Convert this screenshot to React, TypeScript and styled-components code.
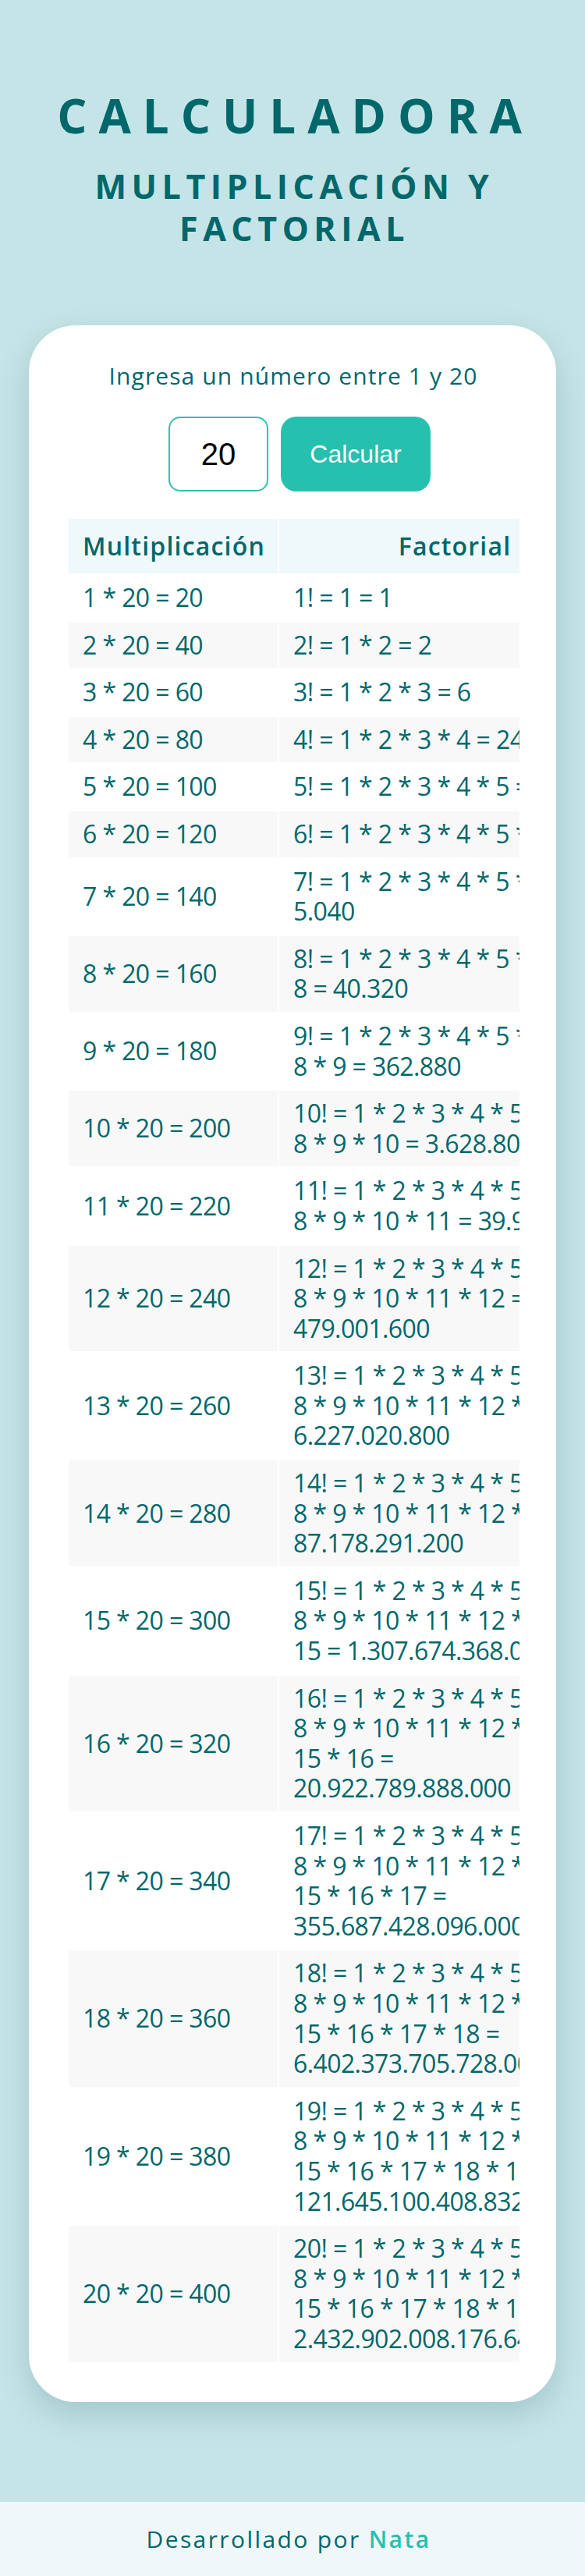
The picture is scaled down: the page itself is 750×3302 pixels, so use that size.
import React from "react";
import styled, { createGlobalStyle } from "styled-components";

const GlobalStyle = createGlobalStyle`
  html, body { margin: 0; padding: 0; }
  body {
    background: #c5e4e7;
    font-family: "Open Sans", "Noto Sans", sans-serif;
    color: #00676a;
  }
`;

const Page = styled.div`
  display: flex;
  flex-direction: column;
`;

const Header = styled.header`
  padding-top: 112px;
  text-align: center;
`;

const Title = styled.h1`
  margin: 0;
  font-size: 60px;
  line-height: 72px;
  font-weight: 700;
  letter-spacing: 15px;
  padding-left: 7px;
  color: #00676a;
`;

const Subtitle = styled.h2`
  margin: 28px 0 0;
  font-size: 43px;
  line-height: 54px;
  font-weight: 700;
  letter-spacing: 6.5px;
  padding-left: 5px;
  color: #00676a;
`;

const SubLine = styled.span`
  display: block;
`;

const Card = styled.main`
  box-sizing: border-box;
  width: 676px;
  margin: 97px auto 0;
  background: #ffffff;
  border-radius: 60px;
  padding: 45px 47px 49px 49px;
  box-shadow: 0 16px 40px rgba(0, 70, 80, 0.18);
`;

const Prompt = styled.p`
  margin: 0;
  text-align: center;
  font-size: 30px;
  line-height: 40px;
  letter-spacing: 1.1px;
  color: #00676a;
`;

const FormRow = styled.div`
  display: flex;
  justify-content: center;
  gap: 16px;
  margin-top: 32px;
  padding-left: 16px;
`;

const NumberInput = styled.input`
  box-sizing: border-box;
  width: 128px;
  height: 96px;
  border: 2px solid #2fc3b0;
  border-radius: 15px;
  text-align: center;
  font-family: "Liberation Sans", Arial, sans-serif;
  font-size: 40px;
  color: #000;
  background: #fff;
  outline: none;
  padding: 0;
`;

const CalcButton = styled.button`
  box-sizing: border-box;
  width: 192px;
  height: 96px;
  border: none;
  border-radius: 20px;
  background: #26c1ae;
  color: #ffffff;
  font-family: "Liberation Sans", Arial, sans-serif;
  font-size: 32px;
  cursor: pointer;
`;

const TableWrap = styled.div`
  margin-top: 33px;
  overflow: hidden;
`;

const Table = styled.table`
  width: 724px;
  table-layout: fixed;
  border-collapse: separate;
  border-spacing: 2px;
  color: #00676a;
`;

const HeadCell = styled.th<{ $w: number }>`
  width: ${(p) => p.$w}px;
  padding: 16px 18px;
  background: #eff8fa;
  font-size: 32px;
  line-height: 38px;
  font-weight: 600;
  letter-spacing: 1.2px;
  text-align: center;
`;

const Row = styled.tr`
  &:nth-child(even) td {
    background: #f8f8f8;
  }
  &:nth-child(odd) td {
    background: #ffffff;
  }
`;

const Cell = styled.td`
  padding: 10px 18px;
  font-size: 32px;
  line-height: 38.6px;
  letter-spacing: -0.6px;
  text-align: left;
  vertical-align: middle;
  white-space: nowrap;
`;

const Line = styled.span`
  display: block;
  white-space: nowrap;
`;

const Footer = styled.footer`
  margin-top: 128px;
  height: 96px;
  box-sizing: border-box;
  padding-right: 10px;
  background: #eff7f9;
  display: flex;
  align-items: center;
  justify-content: center;
  font-size: 30px;
  letter-spacing: 2.4px;
  color: #00676a;
`;

const Author = styled.span`
  margin-left: 10px;
  color: #26c1ae;
  font-weight: 600;
`;

const fmt = (v: bigint) => v.toString().replace(/\B(?=(\d{3})+(?!\d))/g, ".");

const RESULT_ON_NEW_LINE = new Set([7, 12, 13, 14, 16, 17, 18, 19, 20]);

function factorialLines(n: number): string[] {
  let f = BigInt(1);
  for (let i = 2; i <= n; i++) f *= BigInt(i);
  const nums = Array.from({ length: n }, (_, i) => i + 1);
  const groups = [nums.slice(0, 7), nums.slice(7, 14), nums.slice(14)].filter(
    (g) => g.length > 0
  );
  const lines = groups.map((g, gi) => {
    let s = g.join(" * ");
    if (gi === 0) s = `${n}! = ` + s;
    return gi === groups.length - 1 ? s : s + " *";
  });
  const result = fmt(f);
  if (RESULT_ON_NEW_LINE.has(n)) {
    lines[lines.length - 1] += " =";
    lines.push(result);
  } else {
    lines[lines.length - 1] += ` = ${result}`;
  }
  return lines;
}

const N = 20;
const rows = Array.from({ length: 20 }, (_, i) => i + 1);

export default function App() {
  return (
    <>
      <GlobalStyle />
      <Page>
        <Header>
          <Title>CALCULADORA</Title>
          <Subtitle>
            <SubLine>MULTIPLICACIÓN Y</SubLine>
            <SubLine>FACTORIAL</SubLine>
          </Subtitle>
        </Header>
        <Card>
          <Prompt>Ingresa un número entre 1 y 20</Prompt>
          <FormRow>
            <NumberInput type="text" defaultValue="20" />
            <CalcButton type="button">Calcular</CalcButton>
          </FormRow>
          <TableWrap>
            <Table>
              <thead>
                <tr>
                  <HeadCell $w={232}>Multiplicación</HeadCell>
                  <HeadCell $w={414}>Factorial</HeadCell>
                </tr>
              </thead>
              <tbody>
                {rows.map((i) => (
                  <Row key={i}>
                    <Cell>{`${i} * ${N} = ${i * N}`}</Cell>
                    <Cell>
                      {factorialLines(i).map((l, k) => (
                        <Line key={k}>{l}</Line>
                      ))}
                    </Cell>
                  </Row>
                ))}
              </tbody>
            </Table>
          </TableWrap>
        </Card>
        <Footer>
          Desarrollado por<Author>Nata</Author>
        </Footer>
      </Page>
    </>
  );
}
